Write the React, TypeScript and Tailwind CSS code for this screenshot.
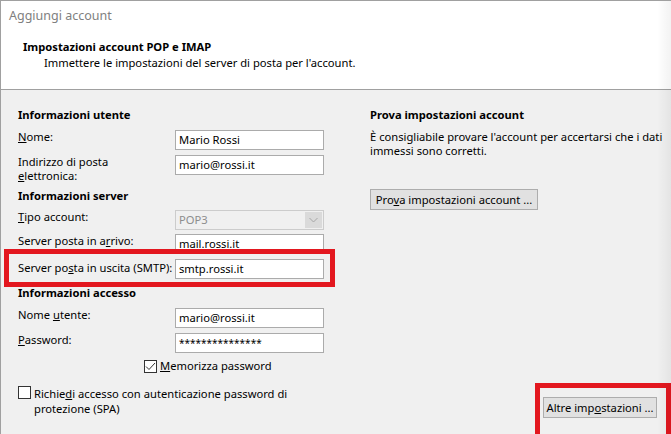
import type { ReactNode } from "react";

function TextBox({ value, className = "" }: { value: string; className?: string }) {
  return (
    <div
      className={
        "h-[20px] w-[149px] border border-[#ababab] bg-white pl-[3px] leading-[18px] text-black " +
        className
      }
    >
      {value}
    </div>
  );
}

function FieldRow({
  label,
  children,
  className = "",
  labelClass = "",
}: {
  label: ReactNode;
  children: ReactNode;
  className?: string;
  labelClass?: string;
}) {
  return (
    <div className={"flex w-[306px] items-start " + className}>
      <div className={"w-[157px] shrink-0 " + labelClass}>{label}</div>
      {children}
    </div>
  );
}

function WinButton({ children, className = "" }: { children: ReactNode; className?: string }) {
  return (
    <div
      className={
        "flex h-[21px] items-center justify-center border border-[#adadad] bg-[#e1e1e1] " +
        className
      }
    >
      {children}
    </div>
  );
}

export default function App() {
  return (
    <div className="relative h-[434px] w-[671px] overflow-hidden whitespace-nowrap border-l border-t border-[#a0a0a0] bg-[#f0f0f0] font-['Noto_Sans',sans-serif] text-[11.2px] leading-[14px] text-black">
      {/* intestazione */}
      <div className="h-[89px] border-b border-[#a0a0a0] bg-white pl-[8px] pt-[7px]">
        <div className="text-[12.5px] leading-[16px] text-[#808080]">Aggiungi account</div>
        <div className="ml-[14px] mt-[16px] font-bold">Impostazioni account POP e IMAP</div>
        <div className="ml-[35px] mt-[2px]">
          Immettere le impostazioni del server di posta per l'account.
        </div>
      </div>

      <div className="flex h-[344px]">
        {/* colonna sinistra */}
        <div className="w-[340px] shrink-0 pl-[17px] pt-[18px]">
          <div className="font-bold">Informazioni utente</div>
          <FieldRow className="mt-[8px]" label={<><u>N</u>ome:</>}>
            <TextBox value="Mario Rossi" />
          </FieldRow>
          <FieldRow
            className="mt-[5px]"
            label={
              <>
                Indirizzo di posta
                <br />
                <u>e</u>lettronica:
              </>
            }
          >
            <TextBox value="mario@rossi.it" />
          </FieldRow>

          <div className="mt-[6px] font-bold">Informazioni server</div>
          <FieldRow className="mt-[7px]" label={<><u>T</u>ipo account:</>}>
            <div className="flex h-[20px] w-[149px] items-center border border-[#cccccc] bg-[#f0f0f0] pl-[3px] pr-[1px] text-[#8d8d8d]">
              <span className="flex-1">POP3</span>
              <div className="flex h-[16px] w-[17px] items-center justify-center bg-[#dadada]">
                <svg width="9" height="6" viewBox="0 0 9 6">
                  <path d="M0.5 1 L4.5 5 L8.5 1" fill="none" stroke="#a6a6a6" strokeWidth="1" />
                </svg>
              </div>
            </div>
          </FieldRow>
          <FieldRow className="mt-[4px]" label={<>Server posta in a<u>r</u>rivo:</>}>
            <TextBox value="mail.rossi.it" />
          </FieldRow>
          <FieldRow
            className="relative mt-[5px]"
            labelClass="pt-[2px]"
            label={<>Server po<u>s</u>ta in uscita (SMTP):</>}
          >
            <TextBox value="smtp.rossi.it" />
            <div className="absolute -bottom-[8px] -left-[14px] -right-[11px] -top-[10px] border-[5px] border-[#e3171f]" />
          </FieldRow>

          <div className="mt-[7px] font-bold">Informazioni accesso</div>
          <FieldRow className="mt-[8px]" label={<>Nome <u>u</u>tente:</>}>
            <TextBox value="mario@rossi.it" />
          </FieldRow>
          <FieldRow className="mt-[5px]" label={<><u>P</u>assword:</>}>
            <TextBox value="***************" className="text-[10px]" />
          </FieldRow>

          <div className="mt-[6px] flex items-center pl-[126px]">
            <div className="flex h-[13px] w-[13px] items-center justify-center border border-[#333333] bg-white">
              <svg width="11" height="9" viewBox="0 0 11 9">
                <path d="M1 4.5 L4 7.5 L10 1" fill="none" stroke="#333333" strokeWidth="1" />
              </svg>
            </div>
            <span className="ml-[3px]">
              <u>M</u>emorizza password
            </span>
          </div>

          <div className="mt-[13px] flex items-start">
            <div className="h-[13px] w-[13px] shrink-0 border border-[#333333] bg-white" />
            <div className="ml-[3px] leading-[15px]">
              Richie<u>d</u>i accesso con autenticazione password di
              <br />
              protezione (SPA)
            </div>
          </div>
        </div>

        {/* colonna destra */}
        <div className="flex min-w-0 flex-1 flex-col pl-[29px] pr-[14px] pt-[18px]">
          <div className="font-bold">Prova impostazioni account</div>
          <div className="mt-[8px]">
            È consigliabile provare l'account per accertarsi che i dati
            <br />
            immessi sono corretti.
          </div>
          <WinButton className="mt-[31px] w-[168px]">
            <span>
              Pro<u>v</u>a impostazioni account ...
            </span>
          </WinButton>

          <div className="relative mb-[16px] mt-auto self-end">
            <WinButton className="w-[114px]">
              <span>
                Altre imp<u>o</u>stazioni ...
              </span>
            </WinButton>
            <div className="absolute -bottom-[24px] -left-[8px] -right-[14px] -top-[14px] border-[5px] border-[#e3171f]" />
          </div>
        </div>
      </div>

      {/* ombra sul bordo destro */}
      <div className="pointer-events-none absolute bottom-0 right-0 top-0 w-[14px] bg-gradient-to-r from-transparent to-black/5" />
    </div>
  );
}
